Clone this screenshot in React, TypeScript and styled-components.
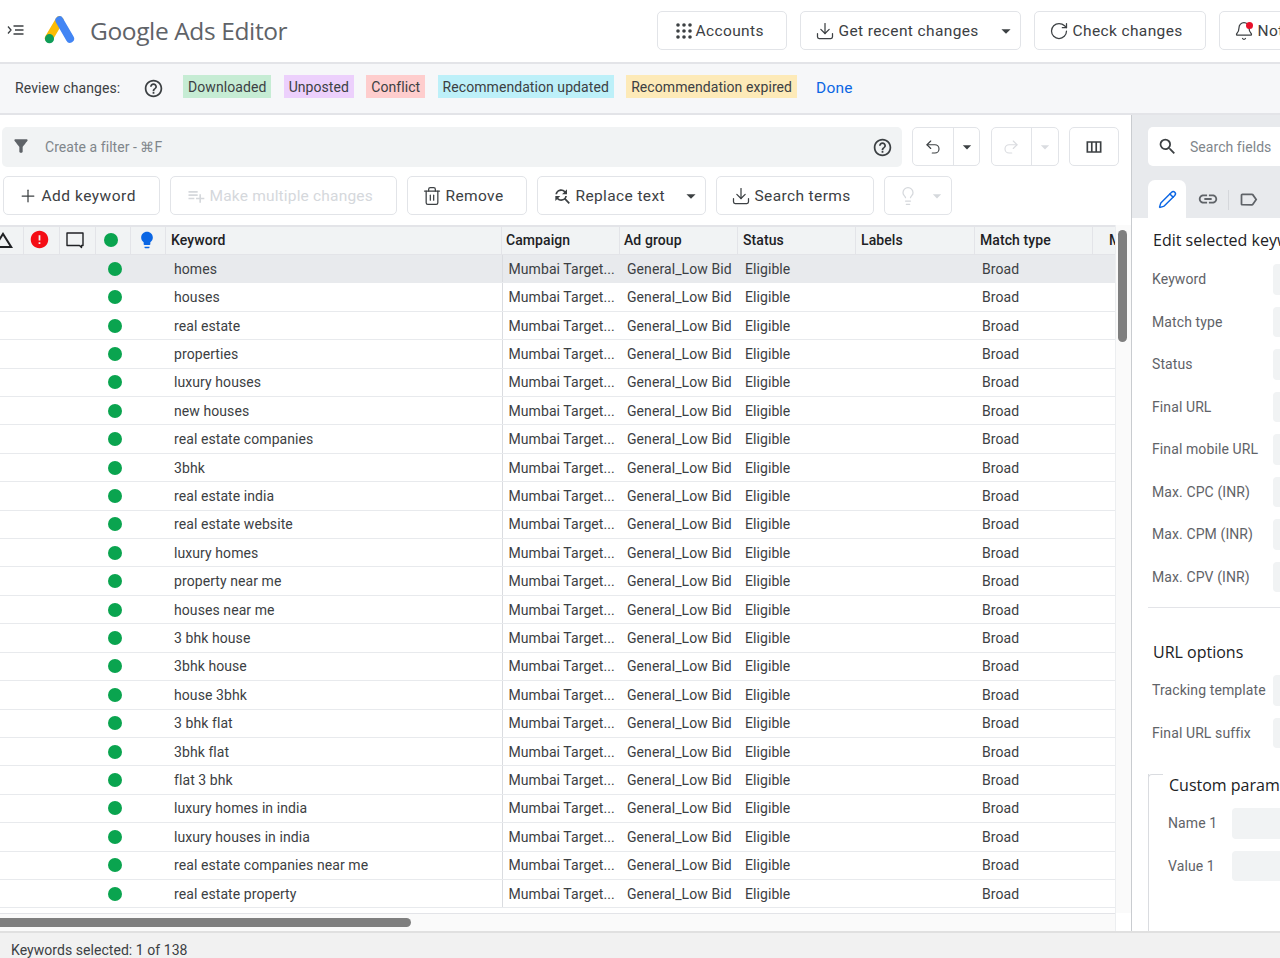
import styled, { createGlobalStyle } from "styled-components";
import { Bell, Download, Lightbulb, Pencil, Plus, Redo2, RotateCw, Trash2, Undo2 } from "lucide-react";
import {
  MdArrowDropDown,
  MdError,
  MdFilterAlt,
  MdFindReplace,
  MdHelpOutline,
  MdLightbulb,
  MdLink,
  MdOutlineChangeHistory,
  MdOutlineLabel,
  MdOutlineViewColumn,
  MdPlaylistAdd,
  MdSearch,
} from "react-icons/md";

const GlobalStyle = createGlobalStyle`
  html, body {
    margin: 0;
    padding: 0;
    height: 100%;
    overflow: hidden;
    background: #fff;
    font-family: Roboto, "Liberation Sans", sans-serif;
  }
  * { box-sizing: border-box; }
`;

const COLUMNS = "24px 36px 36px 35px 35px 336px 118px 118px 118px 119px 118px 22px";

const Page = styled.div`
  width: 1280px;
  height: 958px;
  display: flex;
  flex-direction: column;
  overflow: hidden;
  color: #3c4043;
`;

const Header = styled.header`
  height: 64px;
  flex: none;
  display: flex;
  align-items: center;
  border-bottom: 2px solid #e3e4e8;
  padding: 0 0 0 7px;
`;

const Brand = styled.div`
  display: flex;
  align-items: center;
  width: 650px;
  flex: none;
  margin-top: -2px;
`;

const LogoWrap = styled.span`
  display: flex;
  margin: 0 0 0 19px;
`;

const BrandName = styled.span`
  font-family: "Open Sans", Roboto, sans-serif;
  font-size: 24.5px;
  letter-spacing: -0.38px;
  color: #5f6368;
  margin-left: 15px;
`;

const HeaderActions = styled.div`
  display: flex;
  gap: 13px;
  flex: none;
  margin-top: -1px;
`;

const Button = styled.button<{ $w: number; $off?: boolean; $pad?: number; $track?: number }>`
  width: ${(p) => p.$w}px;
  height: 39px;
  flex: none;
  display: flex;
  align-items: center;
  padding: 0 0 0 ${(p) => p.$pad ?? 13.5}px;
  gap: 4px;
  background: #fff;
  border: 1.5px solid #e2e4e8;
  border-radius: 5px;
  font-family: Roboto, sans-serif;
  font-size: 15.5px;
  letter-spacing: ${(p) => p.$track ?? 0.38}px;
  white-space: nowrap;
  color: ${(p) => (p.$off ? "#d5d8dc" : "#3c4043")};
  svg { flex: none; }
`;

const Caret = styled.span<{ $left: number }>`
  display: flex;
  margin-left: ${(p) => p.$left}px;
`;

const NotifyIcon = styled.span`
  position: relative;
  display: flex;
  &::after {
    content: "";
    position: absolute;
    top: 1px;
    right: 1px;
    width: 7px;
    height: 7px;
    border-radius: 50%;
    background: #e8102a;
  }
`;

const ReviewBar = styled.div`
  height: 51px;
  flex: none;
  display: flex;
  align-items: center;
  background: #f6f7f9;
  border-bottom: 2px solid #e3e4e8;
  padding: 0 0 1px 15px;
  font-size: 14px;
`;

const ReviewLabel = styled.span`
  width: 128px;
  letter-spacing: 0.1px;
  flex: none;
`;

const HelpWrap = styled.span`
  width: 40px;
  flex: none;
  display: flex;
  color: #3c4043;
`;

const Chips = styled.div`
  display: flex;
  gap: 12.3px;
`;

const Chip = styled.span<{ $bg: string }>`
  height: 23px;
  margin-top: -3px;
  padding: 0 5px;
  display: flex;
  align-items: center;
  background: ${(p) => p.$bg};
  font-size: 14px;
  letter-spacing: 0.07px;
  white-space: nowrap;
`;

const DoneLink = styled.a`
  margin-left: 19px;
  color: #0b66e4;
  font-size: 15.5px;
  letter-spacing: 0.2px;
`;

const Main = styled.div`
  flex: 1;
  min-height: 0;
  display: flex;
`;

const LeftPane = styled.section`
  width: 1132px;
  flex: none;
  display: flex;
  flex-direction: column;
  border-right: 1px solid #c9ccd0;
`;

const ToolRow = styled.div<{ $top: number; $gap: number }>`
  display: flex;
  gap: ${(p) => p.$gap}px;
  padding: ${(p) => p.$top}px 0 0 3px;
  flex: none;
`;

const FilterBox = styled.div`
  width: 900px;
  height: 40px;
  margin-left: -1px;
  background: #f1f3f4;
  border-radius: 5px;
  display: flex;
  align-items: center;
  padding: 0 9px 0 9px;
  color: #80868b;
  font-size: 14px;
  letter-spacing: 0.05px;
`;

const FilterText = styled.span`
  margin-left: 14px;
  flex: 1;
`;

const FilterIcon = styled(MdFilterAlt)`
  color: #5f6368;
  margin-top: -3px;
`;

const SplitButton = styled.div<{ $off?: boolean }>`
  width: 68px;
  height: 39px;
  flex: none;
  display: grid;
  grid-template-columns: 39.5px 1fr;
  border: 1.5px solid #e2e4e8;
  border-radius: 5px;
  color: ${(p) => (p.$off ? "#dadce0" : "#3c4043")};
  > span {
    display: flex;
    align-items: center;
    justify-content: center;
  }
  > span + span {
    border-left: 1.5px solid #e2e4e8;
  }
`;

const TableArea = styled.div`
  flex: 1;
  min-height: 0;
  margin-top: 10px;
  display: grid;
  grid-template-columns: 1fr 16px;
  grid-template-rows: 1fr 18px;
`;

const TableClip = styled.div`
  overflow: hidden;
  border-top: 2px solid #e3e4e8;
`;

const HeadRow = styled.div`
  display: grid;
  grid-template-columns: ${COLUMNS};
  height: 28px;
  background: #f1f3f4;
  border-bottom: 1px solid #e3e4e8;
  font-size: 14px;
  font-weight: 500;
  letter-spacing: 0.08px;
  color: #202124;
`;

const HeadCell = styled.div<{ $pad?: number; $center?: boolean; $end?: boolean; $nudge?: number }>`
  display: flex;
  align-items: center;
  justify-content: ${(p) => (p.$center ? "center" : p.$end ? "flex-end" : "flex-start")};
  padding-left: ${(p) => p.$pad ?? 4}px;
  padding-right: ${(p) => p.$nudge ?? 0}px;
  padding-bottom: 2px;
  border-right: 1.5px solid #e3e4e8;
  overflow: hidden;
  white-space: nowrap;
  svg { flex: none; }
  &:last-child { border-right: 0; }
`;

const DataRow = styled.div<{ $selected?: boolean }>`
  display: grid;
  grid-template-columns: ${COLUMNS};
  height: 28.41px;
  background: ${(p) => (p.$selected ? "#e8eaed" : "#fff")};
  border-bottom: 1px solid #e8eaed;
  font-size: 14px;
  letter-spacing: 0.08px;
  color: #3c4043;
`;

const DataCell = styled.div<{ $pad?: number; $rule?: boolean }>`
  display: flex;
  align-items: center;
  padding-left: ${(p) => p.$pad ?? 7}px;
  white-space: nowrap;
  overflow: hidden;
  border-left: ${(p) => (p.$rule ? "1.5px solid #dadce0" : "0")};
`;

const Dot = styled.span`
  width: 14px;
  height: 14px;
  border-radius: 50%;
  background: #0aa44f;
  flex: none;
`;

const ScrollTrackV = styled.div`
  background: #fafafa;
  border-left: 1px solid #eceef0;
  padding: 5px 0 0 2px;
`;

const ScrollThumbV = styled.div`
  width: 9px;
  height: 112px;
  border-radius: 5px;
  background: #7f7f7f;
`;

const ScrollTrackH = styled.div`
  background: #fafafa;
  border-top: 1px solid #e3e4e8;
  padding-top: 4px;
`;

const ScrollThumbH = styled.div`
  width: 411px;
  height: 9px;
  border-radius: 0 5px 5px 0;
  background: #7f7f7f;
`;

const ScrollCorner = styled.div`
  background: #fff;
  border-left: 1px solid #eceef0;
`;

const RightPane = styled.aside`
  flex: 1;
  min-width: 0;
  display: flex;
  flex-direction: column;
  background: #fff;
  overflow: hidden;
`;

const SidebarTop = styled.div`
  height: 103px;
  flex: none;
  background: #e8eaed;
  padding: 12px 0 0 16px;
`;

const SearchBox = styled.div`
  height: 39px;
  background: #fff;
  border-radius: 5px 0 0 5px;
  display: flex;
  align-items: center;
  padding-left: 9px;
  color: #80868b;
  font-size: 14px;
  letter-spacing: 0.05px;
  white-space: nowrap;
`;

const SearchText = styled.span`
  margin-left: 12px;
`;

const SearchIcon = styled(MdSearch)`
  color: #3c4043;
`;

const Tabs = styled.div`
  display: flex;
  align-items: flex-end;
  margin-top: 14px;
  height: 38px;
`;

const Tab = styled.div<{ $active?: boolean; $w: number; $rule?: boolean }>`
  width: ${(p) => p.$w}px;
  height: 38px;
  flex: none;
  display: flex;
  align-items: center;
  justify-content: center;
  background: ${(p) => (p.$active ? "#fff" : "transparent")};
  border-radius: 7px 7px 0 0;
  color: ${(p) => (p.$active ? "#0b66e4" : "#5f6368")};
  position: relative;
  &::after {
    content: "";
    display: ${(p) => (p.$rule ? "block" : "none")};
    position: absolute;
    right: 0;
    top: 10px;
    height: 20px;
    width: 1.5px;
    background: #d5d7db;
  }
`;

const Panel = styled.div`
  flex: 1;
  min-height: 0;
  padding: 11px 0 0 16px;
`;

const PanelTitle = styled.h3<{ $top?: number }>`
  margin: ${(p) => p.$top ?? 0}px 0 0 5px;
  font-family: "Open Sans", Roboto, sans-serif;
  font-size: 16px;
  line-height: 22px;
  font-weight: 500;
  letter-spacing: 0;
  color: #202124;
  white-space: nowrap;
`;

const FieldList = styled.div<{ $top: number; $gap: number }>`
  margin-top: ${(p) => p.$top}px;
  display: flex;
  flex-direction: column;
  gap: ${(p) => p.$gap}px;
`;

const FieldRow = styled.div<{ $inset: number }>`
  display: grid;
  grid-template-columns: ${(p) => p.$inset}px 200px;
  align-items: center;
  height: 30.5px;
  padding-left: 4px;
  font-size: 14px;
  letter-spacing: 0.1px;
  color: #5f6368;
  white-space: nowrap;
`;

const ParamRow = styled(FieldRow)`
  padding-left: 3px;
`;

const FieldInput = styled.span`
  height: 30.5px;
  background: #f1f3f4;
  border-radius: 4px;
`;

const Divider = styled.hr`
  margin: 15px 0 0;
  border: 0;
  border-top: 1.5px solid #e3e4e8;
`;

const ParamBox = styled.div`
  margin: 36px 0 0;
  padding: 0 0 0 16px;
  border-left: 1.5px solid #dadce0;
  height: 170px;
  position: relative;
  &::before {
    content: "";
    position: absolute;
    left: -1.5px;
    top: 0;
    width: 14px;
    height: 6px;
    border-top: 1.5px solid #dadce0;
    border-left: 1.5px solid #dadce0;
    border-radius: 4px 0 0 0;
  }
`;

const ParamTitle = styled.div`
  margin: -10px 0 0 4px;
  font-family: "Open Sans", Roboto, sans-serif;
  font-size: 16px;
  line-height: 22px;
  font-weight: 500;
  color: #202124;
  white-space: nowrap;
`;

const StatusBar = styled.footer`
  height: 27px;
  flex: none;
  background: #f1f1f1;
  border-top: 2px solid #e0e0e0;
  padding: 8px 0 0 11px;
  font-size: 14px;
  line-height: 18px;
  letter-spacing: 0.05px;
`;

const keywords = [
  "homes",
  "houses",
  "real estate",
  "properties",
  "luxury houses",
  "new houses",
  "real estate companies",
  "3bhk",
  "real estate india",
  "real estate website",
  "luxury homes",
  "property near me",
  "houses near me",
  "3 bhk house",
  "3bhk house",
  "house 3bhk",
  "3 bhk flat",
  "3bhk flat",
  "flat 3 bhk",
  "luxury homes in india",
  "luxury houses in india",
  "real estate companies near me",
  "real estate property",
];

const chips = [
  { label: "Downloaded", bg: "#c6ecd4" },
  { label: "Unposted", bg: "#ecd0fc" },
  { label: "Conflict", bg: "#fecdcd" },
  { label: "Recommendation updated", bg: "#bdf0f9" },
  { label: "Recommendation expired", bg: "#fdeab8" },
];

const editFields = [
  "Keyword",
  "Match type",
  "Status",
  "Final URL",
  "Final mobile URL",
  "Max. CPC (INR)",
  "Max. CPM (INR)",
  "Max. CPV (INR)",
];

const MenuIcon = () => (
  <svg width="18" height="18" viewBox="0 0 18 18" fill="none" stroke="#3c4043" strokeWidth="1.3">
    <path d="M6.5 5h10M8 9h8.5M6.5 13h10M1 5.5L4 9l-3 3.5" />
  </svg>
);

const AdsLogo = () => (
  <svg width="31" height="28" viewBox="0 0 34 30">
    <path d="M17 4.5L5.5 24" stroke="#fbbc04" strokeWidth="9" strokeLinecap="round" />
    <path d="M17 4.5L28.5 24.5" stroke="#4285f4" strokeWidth="9" strokeLinecap="round" />
    <circle cx="6" cy="24.5" r="5" fill="#0f9d58" />
  </svg>
);

const DotsIcon = () => (
  <svg width="16" height="16" viewBox="0 0 16 16" fill="#3c4043">
    {[2, 8, 14].map((y) =>
      [2, 8, 14].map((x) => <circle key={`${x}-${y}`} cx={x} cy={y} r="1.8" />)
    )}
  </svg>
);

const CommentIcon = () => (
  <svg width="20" height="20" viewBox="0 0 20 20" fill="none" stroke="#202124" strokeWidth="1.4">
    <path d="M2 3h16v12.5h-1.5v2l-2-2H2z" strokeLinejoin="round" />
  </svg>
);

function App() {
  return (
    <Page>
      <GlobalStyle />
      <Header>
        <Brand>
          <MenuIcon />
          <LogoWrap>
            <AdsLogo />
          </LogoWrap>
          <BrandName>Google Ads Editor</BrandName>
        </Brand>
        <HeaderActions>
          <Button $w={130} $pad={17.5}>
            <DotsIcon />
            Accounts
          </Button>
          <Button $w={221}>
            <Download size={20} strokeWidth={1.5} />
            Get recent changes
            <Caret $left={12}>
              <MdArrowDropDown size={22} />
            </Caret>
          </Button>
          <Button $w={172}>
            <RotateCw size={20} strokeWidth={1.5} />
            Check changes
          </Button>
          <Button $w={150}>
            <NotifyIcon>
              <Bell size={20} strokeWidth={1.5} />
            </NotifyIcon>
            Notifications
          </Button>
        </HeaderActions>
      </Header>

      <ReviewBar>
        <ReviewLabel>Review changes:</ReviewLabel>
        <HelpWrap>
          <MdHelpOutline size={21} />
        </HelpWrap>
        <Chips>
          {chips.map((chip) => (
            <Chip key={chip.label} $bg={chip.bg}>
              {chip.label}
            </Chip>
          ))}
        </Chips>
        <DoneLink>Done</DoneLink>
      </ReviewBar>

      <Main>
        <LeftPane>
          <ToolRow $top={12} $gap={10.3}>
            <FilterBox>
              <FilterIcon size={20} />
              <FilterText>Create a filter - ⌘F</FilterText>
              <MdHelpOutline size={21} color="#3c4043" />
            </FilterBox>
            <SplitButton>
              <span>
                <Undo2 size={18} strokeWidth={1.5} />
              </span>
              <span>
                <MdArrowDropDown size={20} />
              </span>
            </SplitButton>
            <SplitButton $off>
              <span>
                <Redo2 size={18} strokeWidth={1.5} />
              </span>
              <span>
                <MdArrowDropDown size={20} />
              </span>
            </SplitButton>
            <Button $w={50} $pad={14}>
              <MdOutlineViewColumn size={20} />
            </Button>
          </ToolRow>
          <ToolRow $top={9} $gap={10}>
            <Button $w={157} $track={0.5}>
              <Plus size={20} strokeWidth={1.5} />
              Add keyword
            </Button>
            <Button $w={227} $off $pad={14.5} $track={0.18}>
              <MdPlaylistAdd size={20} />
              Make multiple changes
            </Button>
            <Button $w={120}>
              <Trash2 size={20} strokeWidth={1.5} />
              Remove
            </Button>
            <Button $w={169}>
              <MdFindReplace size={20} />
              Replace text
              <Caret $left={11}>
                <MdArrowDropDown size={22} />
              </Caret>
            </Button>
            <Button $w={158}>
              <Download size={20} strokeWidth={1.5} />
              Search terms
            </Button>
            <Button $w={68} $off $pad={12.5}>
              <Lightbulb size={20} strokeWidth={1.5} />
              <Caret $left={5}>
                <MdArrowDropDown size={20} />
              </Caret>
            </Button>
          </ToolRow>

          <TableArea>
            <TableClip>
              <HeadRow>
                <HeadCell $pad={0} $end $nudge={8}>
                  <MdOutlineChangeHistory size={24} color="#202124" />
                </HeadCell>
                <HeadCell $pad={0} $center $nudge={4}>
                  <MdError size={21} color="#f40d15" />
                </HeadCell>
                <HeadCell $pad={0} $center $nudge={6}>
                  <CommentIcon />
                </HeadCell>
                <HeadCell $pad={8}>
                  <Dot />
                </HeadCell>
                <HeadCell $pad={0} $center $nudge={2}>
                  <MdLightbulb size={20} color="#0b66e4" />
                </HeadCell>
                <HeadCell $pad={5}>Keyword</HeadCell>
                <HeadCell>Campaign</HeadCell>
                <HeadCell>Ad group</HeadCell>
                <HeadCell $pad={5}>Status</HeadCell>
                <HeadCell $pad={5}>Labels</HeadCell>
                <HeadCell $pad={5}>Match type</HeadCell>
                <HeadCell $pad={16}>M</HeadCell>
              </HeadRow>
              {keywords.map((keyword, i) => (
                <DataRow key={keyword} $selected={i === 0}>
                  <DataCell />
                  <DataCell />
                  <DataCell />
                  <DataCell $pad={12}>
                    <Dot />
                  </DataCell>
                  <DataCell />
                  <DataCell $pad={8}>{keyword}</DataCell>
                  <DataCell $rule $pad={5.5}>
                    Mumbai Target...
                  </DataCell>
                  <DataCell>General_Low Bid</DataCell>
                  <DataCell>Eligible</DataCell>
                  <DataCell />
                  <DataCell>Broad</DataCell>
                  <DataCell />
                </DataRow>
              ))}
            </TableClip>
            <ScrollTrackV>
              <ScrollThumbV />
            </ScrollTrackV>
            <ScrollTrackH>
              <ScrollThumbH />
            </ScrollTrackH>
            <ScrollCorner />
          </TableArea>
        </LeftPane>

        <RightPane>
          <SidebarTop>
            <SearchBox>
              <SearchIcon size={21} />
              <SearchText>Search fields</SearchText>
            </SearchBox>
            <Tabs>
              <Tab $active $w={38}>
                <Pencil size={19} strokeWidth={1.8} />
              </Tab>
              <Tab $w={43} $rule>
                <MdLink size={22} />
              </Tab>
              <Tab $w={38}>
                <MdOutlineLabel size={21} />
              </Tab>
            </Tabs>
          </SidebarTop>
          <Panel>
            <PanelTitle>Edit selected keywords</PanelTitle>
            <FieldList $top={13} $gap={12}>
              {editFields.map((label) => (
                <FieldRow key={label} $inset={121}>
                  <span>{label}</span>
                  <FieldInput />
                </FieldRow>
              ))}
            </FieldList>
            <Divider />
            <PanelTitle $top={33}>URL options</PanelTitle>
            <FieldList $top={12} $gap={12}>
              <FieldRow $inset={121}>
                <span>Tracking template</span>
                <FieldInput />
              </FieldRow>
              <FieldRow $inset={121}>
                <span>Final URL suffix</span>
                <FieldInput />
              </FieldRow>
            </FieldList>
            <ParamBox>
              <ParamTitle>Custom parameters</ParamTitle>
              <FieldList $top={12} $gap={12}>
                <ParamRow $inset={64}>
                  <span>Name 1</span>
                  <FieldInput />
                </ParamRow>
                <ParamRow $inset={64}>
                  <span>Value 1</span>
                  <FieldInput />
                </ParamRow>
              </FieldList>
            </ParamBox>
          </Panel>
        </RightPane>
      </Main>

      <StatusBar>Keywords selected: 1 of 138</StatusBar>
    </Page>
  );
}

export default App;
